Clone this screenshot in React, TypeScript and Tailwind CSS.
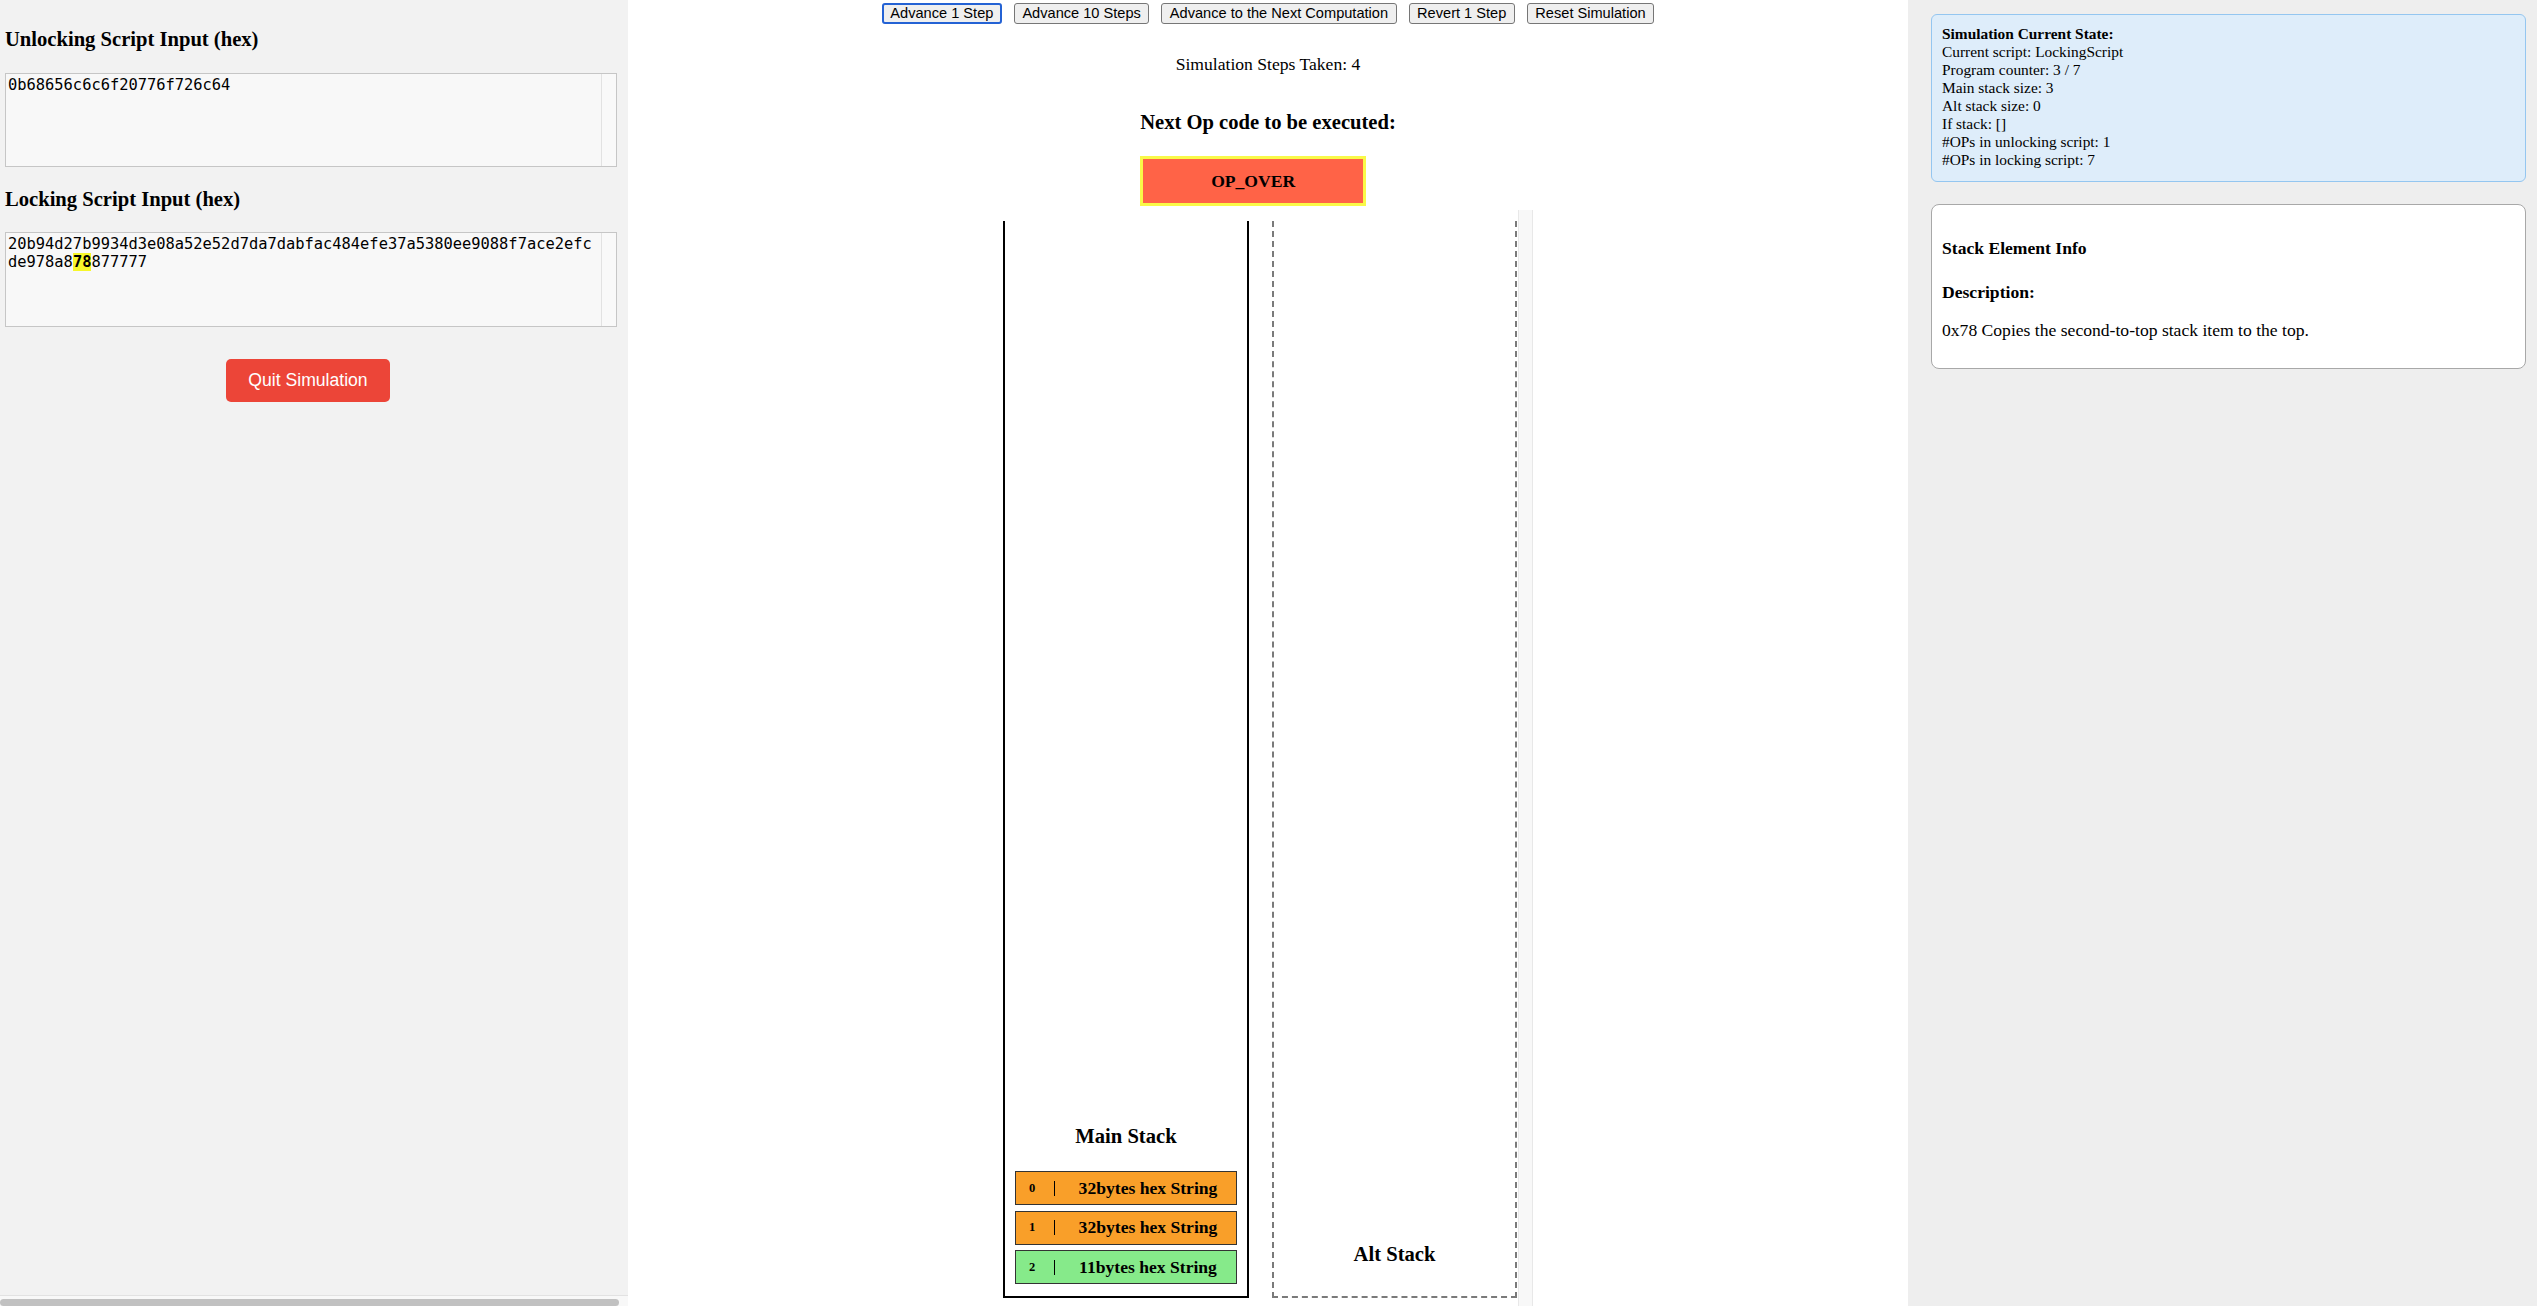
import React from 'react';

const SERIF = "font-['Liberation_Serif',serif]";
const SANS = "font-['Liberation_Sans',Arial,sans-serif]";
const MONO = "font-['DejaVu_Sans_Mono',monospace]";

const CONTROLS = [
  'Advance 1 Step',
  'Advance 10 Steps',
  'Advance to the Next Computation',
  'Revert 1 Step',
  'Reset Simulation',
];

const MAIN_STACK = [
  { index: 0, label: '32bytes hex String', color: 'bg-[#f99f29]' },
  { index: 1, label: '32bytes hex String', color: 'bg-[#f99f29]' },
  { index: 2, label: '11bytes hex String', color: 'bg-[#86ea8a]' },
];

const STATE_LINES = [
  'Current script: LockingScript',
  'Program counter: 3 / 7',
  'Main stack size: 3',
  'Alt stack size: 0',
  'If stack: []',
  '#OPs in unlocking script: 1',
  '#OPs in locking script: 7',
];

function HexBox({ children, height }: { children: React.ReactNode; height: string }) {
  return (
    <div className={`${height} w-[612px] flex border border-[#c6c6c6] bg-[#f8f8f8]`}>
      <div className={`flex-1 px-[2px] pt-[2px] text-[15.4px] leading-[18px] text-black ${MONO}`}>
        {children}
      </div>
      <div className="w-[15px] border-l border-[#e2e2e2] bg-[#f9f9f9]" />
    </div>
  );
}

export default function App() {
  return (
    <div className={`flex h-screen w-full overflow-hidden bg-white text-black ${SERIF}`}>
      {/* Left: script inputs */}
      <div className="w-[628px] shrink-0 flex flex-col bg-[#f2f2f2]">
        <div className="px-[5px]">
          <h3 className="mt-[27px] text-[20.6px] leading-[24px] font-bold">Unlocking Script Input (hex)</h3>
          <div className="mt-[22px]">
            <HexBox height="h-[94px]">
              <div>0b68656c6c6f20776f726c64</div>
            </HexBox>
          </div>
          <h3 className="mt-[20px] text-[20.6px] leading-[24px] font-bold">Locking Script Input (hex)</h3>
          <div className="mt-[21px]">
            <HexBox height="h-[95px]">
              <div>20b94d27b9934d3e08a52e52d7da7dabfac484efe37a5380ee9088f7ace2efc</div>
              <div className="flex">
                <span>de978a8</span>
                <span className="bg-[#f7f72a] font-bold">78</span>
                <span>877777</span>
              </div>
            </HexBox>
          </div>
          <button
            className={`mt-[32px] ml-[221px] h-[43px] w-[164px] rounded-[5px] bg-[#ec4538] text-[17.6px] text-white ${SANS}`}
          >
            Quit Simulation
          </button>
        </div>
        <div className="mt-auto h-[11px] shrink-0 border-t border-[#e2e2e2] bg-[#f8f8f8] pt-[3px]">
          <div className="h-[7px] w-[619px] rounded-[4px] bg-[#c1c1c1]" />
        </div>
      </div>

      {/* Middle: controls and stacks */}
      <div className="flex-1 flex flex-col items-center">
        <div className="flex gap-[12px] pt-[3px]">
          {CONTROLS.map((label, i) => (
            <button
              key={label}
              className={`h-[21px] rounded-[3px] bg-[#efefef] text-[14.6px] leading-[17px] ${SANS} ${
                i === 0 ? 'border-2 border-[#2462d4] px-[6.5px]' : 'border border-[#767676] px-[7.5px]'
              }`}
            >
              {label}
            </button>
          ))}
        </div>

        <p className="mt-[30px] text-[17.6px] leading-[20px]">Simulation Steps Taken: 4</p>

        <div className="mt-[36px] flex flex-col items-start">
          <h3 className="text-[20.6px] leading-[24px] font-bold">Next Op code to be executed:</h3>
          <div className="mt-[22px] h-[50px] w-[226px] flex items-center justify-center border-[3px] border-[#f9f948] bg-[#ff6347]">
            <span className="text-[17.6px] font-bold">OP_OVER</span>
          </div>
        </div>

        <div className="mt-[4px] flex-1 min-h-0 w-[530px] flex">
          <div className="mt-[11px] mb-[8px] w-[246px] flex flex-col justify-end border-x-2 border-b-2 border-black px-[10px] pb-[12px]">
            <h3 className="mb-[23px] text-center text-[20.6px] leading-[24px] font-bold">Main Stack</h3>
            <div className="flex flex-col gap-[5.5px]">
              {MAIN_STACK.map((item) => (
                <div key={item.index} className={`h-[34px] flex items-center border border-[#333] ${item.color}`}>
                  <span className="w-[32px] text-center text-[12.5px] font-bold">{item.index}</span>
                  <span className="w-[12px] flex justify-center">
                    <span className="h-[15px] w-[1px] bg-black" />
                  </span>
                  <span className="flex-1 text-center text-[17.6px] font-bold">{item.label}</span>
                </div>
              ))}
            </div>
          </div>

          <div className="ml-[23px] mt-[11px] mb-[8px] w-[245px] flex flex-col justify-end border-2 border-t-0 border-dashed border-[#7a7a7a] pb-[30px]">
            <h3 className="text-center text-[20.6px] leading-[24px] font-bold">Alt Stack</h3>
          </div>

          <div className="ml-[1px] w-[15px] border-x border-[#e8e8e8] bg-[#f8f8f8]" />
        </div>
      </div>

      {/* Right: state info */}
      <div className="w-[629px] shrink-0 bg-[#eeeeee] pt-[14px] pl-[23px] pr-[11px]">
        <div className="rounded-[6px] border border-[#94c6f0] bg-[#deedfa] px-[10px] pt-[10px] pb-[12px] text-[15.4px] leading-[18px]">
          <div className="font-bold">Simulation Current State:</div>
          {STATE_LINES.map((line) => (
            <div key={line}>{line}</div>
          ))}
        </div>

        <div className="mt-[22px] rounded-[8px] border border-[#a8a8a8] bg-white px-[10px] py-[10px]">
          <h4 className="mt-[23.4px] text-[17.6px] leading-[20px] font-bold">Stack Element Info</h4>
          <h4 className="mt-[24px] text-[17.6px] leading-[20px] font-bold">Description:</h4>
          <p className="mt-[18px] mb-[18px] text-[17.6px] leading-[20px]">
            0x78 Copies the second-to-top stack item to the top.
          </p>
        </div>
      </div>
    </div>
  );
}
